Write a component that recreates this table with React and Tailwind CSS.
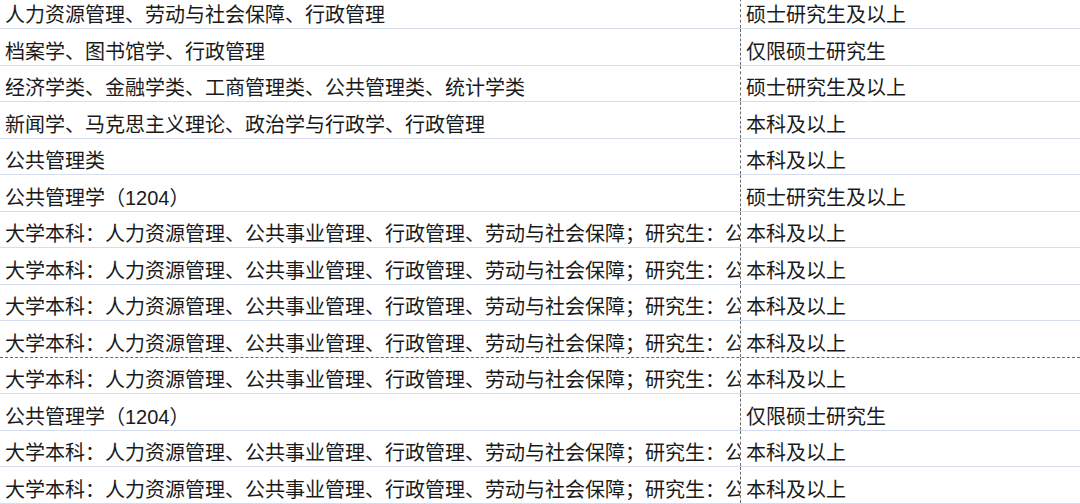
const rows = [
  ["人力资源管理、劳动与社会保障、行政管理", "硕士研究生及以上"],
  ["档案学、图书馆学、行政管理", "仅限硕士研究生"],
  ["经济学类、金融学类、工商管理类、公共管理类、统计学类", "硕士研究生及以上"],
  ["新闻学、马克思主义理论、政治学与行政学、行政管理", "本科及以上"],
  ["公共管理类", "本科及以上"],
  ["公共管理学（1204）", "硕士研究生及以上"],
  ["UG", "本科及以上"],
  ["UG", "本科及以上"],
  ["UG", "本科及以上"],
  ["UG", "本科及以上", true],
  ["UG", "本科及以上"],
  ["公共管理学（1204）", "仅限硕士研究生"],
  ["UG", "本科及以上"],
  ["UG", "本科及以上"],
];

const ug = "大学本科：人力资源管理、公共事业管理、行政管理、劳动与社会保障；研究生：公共管理、行政管理";

const App = () => {
  return (
    <div className="h-[504px] w-[1080px] overflow-hidden bg-white text-[#1a1a1a]" style={{ fontFamily: '"Liberation Sans", "Noto Sans CJK SC", sans-serif' }}>
      <div className="-mt-[7.5px]">
        {rows.map(([major, degree, pageBreak], i) => (
          <div
            key={i}
            className={
              "grid h-[36.5px] grid-cols-[740px_1fr] " +
              (pageBreak ? "border-b border-dashed border-[#6b6b6b]" : "border-b-[1.5px] border-[#d6ddee]")
            }
          >
            <div className="flex items-end overflow-hidden whitespace-nowrap pb-[0px] pl-[5px] text-[20px] leading-[26px]">
              {major === "UG" ? ug : major}
            </div>
            <div className="flex items-end whitespace-nowrap border-l border-dashed border-[#6b6b6b] pb-[0px] pl-[5px] text-[20px] leading-[26px]">
              {degree}
            </div>
          </div>
        ))}
      </div>
    </div>
  );
};

export default App;
